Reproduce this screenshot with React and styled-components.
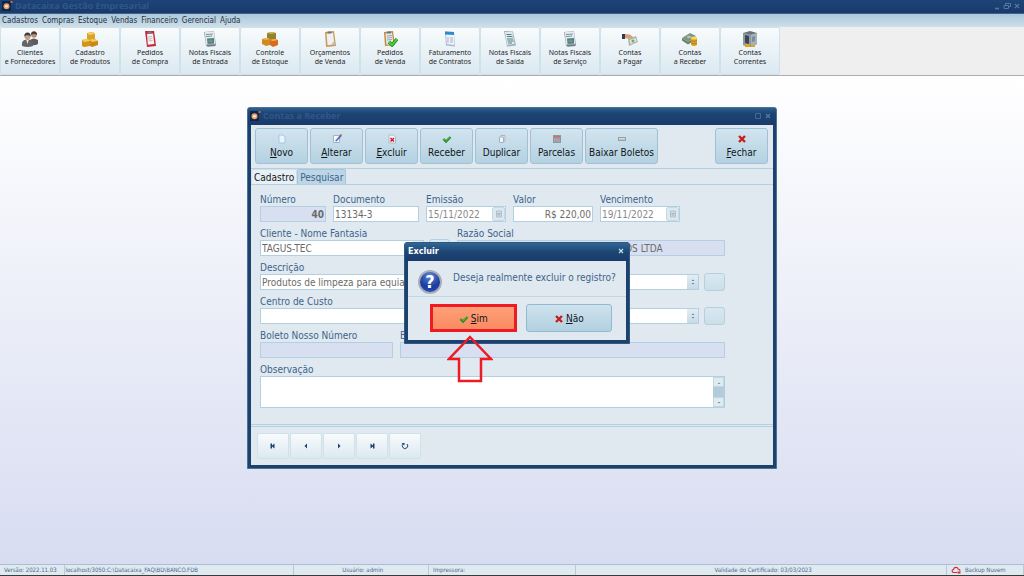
import React, { useState } from 'react'
import styled, { createGlobalStyle } from 'styled-components'

const menus = ['Cadastros', 'Compras', 'Estoque', 'Vendas', 'Financeiro', 'Gerencial', 'Ajuda']

const shortcuts = [
  { icon: 'people', top: 'Clientes', bottom: 'e Fornecedores' },
  { icon: 'gold', top: 'Cadastro', bottom: 'de Produtos' },
  { icon: 'redClip', top: 'Pedidos', bottom: 'de Compra' },
  { icon: 'invoice', top: 'Notas Fiscais', bottom: 'de Entrada' },
  { icon: 'boxes', top: 'Controle', bottom: 'de Estoque' },
  { icon: 'clip', top: 'Orçamentos', bottom: 'de Venda' },
  { icon: 'clipCheck', top: 'Pedidos', bottom: 'de Venda' },
  { icon: 'contract', top: 'Faturamento', bottom: 'de Contratos' },
  { icon: 'sheet', top: 'Notas Fiscais', bottom: 'de Saída' },
  { icon: 'invoice', top: 'Notas Fiscais', bottom: 'de Serviço' },
  { icon: 'pay', top: 'Contas', bottom: 'a Pagar' },
  { icon: 'receive', top: 'Contas', bottom: 'a Receber' },
  { icon: 'safe', top: 'Contas', bottom: 'Correntes' },
]

const actions = [
  { icon: 'new', hot: 'N', text: 'ovo' },
  { icon: 'edit', hot: 'A', text: 'lterar' },
  { icon: 'remove', hot: 'E', text: 'xcluir' },
  { icon: 'check', text: 'Receber' },
  { icon: 'copy', text: 'Duplicar' },
  { icon: 'calc', text: 'Parcelas' },
  { icon: 'slip', text: 'Baixar Boletos', wide: true },
]

const shortcutIcons = {
  people: (
    <>
      <circle cx="12" cy="4" r="2.8" fill="#b98d70" />
      <path d="M9 4c-.5-5 6.500-5 6 0-2-1.500-4-1.500-6 0z" fill="#4a3a32" />
      <path d="M8 13V9q3.500-3 8 0v4q-3 2-8 1z" fill="#5b5b60" />
      <circle cx="5.500" cy="5.500" r="3" fill="#c99d80" />
      <path d="M2.300 5.500c-.5-5.500 7-5.500 6.400 0-2-2-4.400-2-6.400 0z" fill="#423c3a" />
      <path d="M0 15v-3.500q1-3 5.500-3t5.500 3V15q-5 2-11 0z" fill="#646469" />
      <path d="M4.300 9l1.200 4 1.200-4z" fill="#eee" />
    </>
  ),
  gold: (
    <>
      <path d="M5 2l6-1 2 2v5l-6 1-2-1z" fill="#dca125" />
      <path d="M0 9l6-1 2 2v5l-6 1-2-1z" fill="#d39418" />
      <path d="M8 9l5-1 3 2v4l-6 2-2-1z" fill="#c98a14" />
      <path d="M5 2l6-1 2 2-6 1zM0 9l6-1 2 2-6 1zM8 9l5-1 3 2-6 1z" fill="#f3cd61" />
    </>
  ),
  redClip: (
    <>
      <path d="M3 0l9-.5L14 15l-9 1z" fill="#c4293a" />
      <path d="M5 3l6-.5 1.300 10.500-6.500.8z" fill="#f5f2f3" />
      <path d="M6 6l4-.5M6 8l4.500-.5M6.500 10l4-.5" stroke="#b4b0b8" strokeWidth=".8" />
      <path d="M5.500.5h4v2h-4z" fill="#767b85" />
    </>
  ),
  invoice: (
    <>
      <path d="M2 1l10-1 2 14-10 1z" fill="#9aa8b1" />
      <path d="M3 1l9-.5 1 12-9 1z" fill="#e5ecee" />
      <path d="M4 3.500l7-.5M4 5.500l6-.5" stroke="#7d95a3" />
      <path d="M5 7.500l7-.5v5.500l-6.500.5z" fill="#61788c" />
      <path d="M6.500 9l4-.3v2.300l-4 .3z" fill="#5aa866" />
      <path d="M4.500 14l9-.5v1.500l-8 .8z" fill="#6e7d8a" />
    </>
  ),
  boxes: (
    <>
      <path d="M5 2l5-1 4 1v6l-5 1-4-2z" fill="#93812d" />
      <path d="M5 2l5-1 4 1-5 1z" fill="#c7b75d" />
      <path d="M0 8l5-1 3 1v6l-4 1-4-2z" fill="#d08a1e" />
      <path d="M8 9l5-1 3 1v5l-5 2-3-2z" fill="#dc6a1b" />
      <path d="M0 8l5-1 3 1-4 1zM8 9l5-1 3 1-5 1z" fill="#f3b35c" />
    </>
  ),
  clip: (
    <>
      <path d="M3 1l9-1 2 15-10 1z" fill="#c99a50" />
      <path d="M4.500 2.500l6.500-.7 1.500 11.700-7 .7z" fill="#eef0f5" />
      <path d="M5.500.5h4v2h-4z" fill="#70757c" />
      <path d="M12 10l1 3.500-4 .5z" fill="#b7bcc8" />
    </>
  ),
  clipCheck: (
    <>
      <path d="M2 1l9-1 2 14-10 1z" fill="#bd8c43" />
      <path d="M3.500 2.500l6.500-.7 1.500 11.200-7 .7z" fill="#e6e8ec" />
      <path d="M5 5l5-.5M5 7l5-.5M5 9l5-.5" stroke="#8d949c" strokeWidth=".8" />
      <path d="M5 .5h4v2H5z" fill="#70757c" />
      <path d="M7 11l3 3 5-6" stroke="#1e8e1c" strokeWidth="3.400" fill="none" />
      <path d="M7 11l3 3 5-6" stroke="#4fd03c" strokeWidth="1.800" fill="none" />
    </>
  ),
  contract: (
    <>
      <path d="M3 .5l9 .5 1 14.500-9-1z" fill="#a9b8cd" />
      <path d="M4 2.500l8 .5.3 11-7.500-1z" fill="#f0f4f9" />
      <path d="M3 .5l9 .5v3L3 3.500z" fill="#2e8ad0" />
      <path d="M5 7h2M8 7h3M5 9h2M8 9h3M5 11h2M8 11h3" stroke="#a3b2c4" />
    </>
  ),
  sheet: (
    <>
      <path d="M2 0l9 .5 3 14-9 1z" fill="#9db0b7" />
      <path d="M3 1h7.500l2 12-7.500 1z" fill="#dde9eb" />
      <path d="M4.500 3.500h5M5 5.500h5.500M5 8h6M5.500 10h6M6 12h4" stroke="#577f8b" />
    </>
  ),
  pay: (
    <>
      <path d="M0 3h3v5H0z" fill="#303a52" />
      <path d="M3 3l5 .5 3 2.500-1 2-7-.8z" fill="#d7a078" />
      <path d="M6 8l8-3 2 6-9 4z" fill="#a8b5a2" />
      <path d="M7.500 9l6-2 1.300 3.300-6.300 3z" fill="#dfe6d9" />
      <circle cx="11" cy="10" r="1.500" fill="#889c80" />
    </>
  ),
  receive: (
    <>
      <path d="M0 7l8-5 6 3-8 6z" fill="#809680" />
      <path d="M0 7l6 4 6-4v2.500l-6 4-6-4z" fill="#65806a" />
      <ellipse cx="7" cy="6" rx="2" ry="1.300" fill="#b5c6b2" />
      <path d="M9 7v7q3 2 6 0V7z" fill="#dba21d" />
      <ellipse cx="12" cy="7" rx="3" ry="1.500" fill="#f8d75a" />
      <path d="M9 9.500q3 2 6 0M9 12q3 2 6 0" stroke="#b98418" fill="none" />
    </>
  ),
  safe: (
    <>
      <path d="M1 2l7-2 7 2v11l-6 3-8-2z" fill="#66717b" />
      <path d="M1 2l8 1.500V16l-8-2z" fill="#8d98a2" />
      <path d="M3 4l4 1v8l-4-1z" fill="#3b4652" />
      <path d="M9 3.500L15 2v11l-6 3z" fill="#a6b1b9" />
      <path d="M10 6l3-1v5l-3 1z" fill="#7d8a95" />
      <path d="M3 13h5v3H3zM9 14h4v2H9z" fill="#dea81d" />
    </>
  ),
}

const smallIcons = {
  new: <path d="M2 1h4l2 2v6H2z" fill="#eaf4ff" stroke="#a5c6e6" />,
  edit: (
    <>
      <path d="M1.500 1.500h6v7h-6z" fill="#f6f9fd" stroke="#a4b3ca" />
      <path d="M3 7l5-6 1.500 1.500-5 5z" fill="#5a70ba" />
      <path d="M7.500 1L9 0l1 1-1 1.500z" fill="#c5503a" />
    </>
  ),
  remove: (
    <>
      <path d="M2 1h4.500l2 2v6H2z" fill="#f3f5fa" stroke="#adbacb" />
      <path d="M3.500 4l3.500 3.500M7 4L3.500 7.500" stroke="#cc1f28" strokeWidth="1.500" />
    </>
  ),
  check: (
    <>
      <path d="M1.500 5l2.500 2.500L8.500 3" stroke="#2a8c29" strokeWidth="2.400" fill="none" />
      <path d="M2 4.800l2 2L8 3" stroke="#4dbb3c" strokeWidth="1" fill="none" />
    </>
  ),
  copy: (
    <>
      <path d="M4 1.500h4v5.500H4z" fill="#e4eaf0" stroke="#a5b4c3" />
      <path d="M2.500 3h4v5.500h-4z" fill="#f1f5f9" stroke="#a5b4c3" />
    </>
  ),
  calc: (
    <>
      <path d="M1 1h8v8H1z" fill="#92969c" />
      <path d="M2 2h6v1.500H2z" fill="#d2706c" />
      <path d="M2 5h6M2 7h6" stroke="#bdc0c6" strokeDasharray="1.400 .8" />
    </>
  ),
  slip: (
    <>
      <path d="M1 3h8v4H1z" fill="#98a0a8" />
      <path d="M2 4.200h6v1.300H2z" fill="#e4e8eb" />
    </>
  ),
  close: <path d="M2 2l6 6M8 2l-6 6" stroke="#c81e1b" strokeWidth="2.400" />,
  date: (
    <>
      <path d="M2.500 2h5v6h-5z" fill="#d5dbe1" stroke="#b3bec9" />
      <path d="M3.500 4.500h3M3.500 6h3" stroke="#9aa6b3" strokeWidth=".8" />
    </>
  ),
  spin: <path d="M3.500 4L5 2.500 6.500 4zM3.500 6L5 7.500 6.500 6z" fill="#6485a3" />,
  up: <path d="M3.500 6L5 4.500 6.500 6z" fill="#6c90ad" />,
  down: <path d="M3.500 4L5 5.500 6.500 4z" fill="#6c90ad" />,
  first: <path d="M2.500 2.500H4v2L6.500 2.500v5L4 5.500v2H2.500z" fill="#1c3f70" />,
  prev: <path d="M6 2.500v5L3.500 5z" fill="#1c3f70" />,
  next: <path d="M4 2.500v5L6.500 5z" fill="#1c3f70" />,
  last: <path d="M7.500 2.500H6v2L3.500 2.500v5L6 5.500v2h1.500z" fill="#1c3f70" />,
  reload: (
    <>
      <path d="M3.500 2.600A2.700 2.700 0 1 0 7 3" stroke="#1c3f70" strokeWidth="1" fill="none" />
      <path d="M1.500 2h3v2.500z" fill="#1c3f70" />
    </>
  ),
  min: <path d="M3 7.500h4" stroke="#55789c" strokeWidth="1.600" />,
  restore: <path d="M3.500 4V2.500h5v3H7M2 4.500h4.500v3H2z" stroke="#55789c" fill="none" />,
  max: <path d="M2.500 2.500h5v5h-5z" stroke="#44688f" fill="none" />,
  x: <path d="M3 3l4 4M7 3L3 7" stroke="currentColor" strokeWidth="1.200" />,
}

const Glyph = ({ name }) => (
  <svg width="10" height="10" viewBox="0 0 10 10" aria-hidden="true">{smallIcons[name]}</svg>
)

const Logo = () => (
  <svg width="12" height="12" viewBox="0 0 12 12" aria-hidden="true">
    <rect x="1" y="1" width="9" height="10" fill="#0f2747" />
    <circle cx="5.500" cy="6.300" r="3" fill="#ef9a67" />
    <circle cx="5.500" cy="6.300" r="1.300" fill="#fff1e4" />
    <path d="M9.500 1h2v2h-2z" fill="#e2603a" />
  </svg>
)

const Field = ({ id, label, children, ...rest }) => (
  <FieldBox {...rest}>
    <Label htmlFor={id}>{label}</Label>
    {children}
  </FieldBox>
)

const App = () => {
  const [tab, setTab] = useState('Cadastro')
  const [open, setOpen] = useState(true)

  return (
    <>
      <GlobalStyle />
      <Page>
        <TitleBar>
          <Logo />
          <Title>Datacaixa Gestão Empresarial</Title>
          <WinButton aria-label="Minimizar"><Glyph name="min" /></WinButton>
          <WinButton aria-label="Restaurar"><Glyph name="restore" /></WinButton>
          <WinButton aria-label="Fechar"><Glyph name="x" /></WinButton>
        </TitleBar>
        <MenuBar>
          {menus.map((el) => <MenuItem key={el}>{el}</MenuItem>)}
        </MenuBar>
        <Shortcuts>
          {shortcuts.map((el) => (
            <Shortcut key={el.top + el.bottom}>
              <svg width="16" height="16" viewBox="0 0 16 16" aria-hidden="true">{shortcutIcons[el.icon]}</svg>
              <span>{el.top}<br />{el.bottom}</span>
            </Shortcut>
          ))}
        </Shortcuts>

        <Desktop>
          <Window>
            <WindowTitle>
              <Logo />
              <Title>Contas a Receber</Title>
              <WinButton aria-label="Maximizar"><Glyph name="max" /></WinButton>
              <WinButton aria-label="Fechar janela"><Glyph name="x" /></WinButton>
            </WindowTitle>
            <Actions>
              {actions.map((el) => (
                <Action key={el.text} $wide={el.wide}>
                  <Glyph name={el.icon} />
                  <span>{el.hot && <u>{el.hot}</u>}{el.text}</span>
                </Action>
              ))}
              <CloseAction>
                <Glyph name="close" />
                <span><u>F</u>echar</span>
              </CloseAction>
            </Actions>
            <Tabs>
              {['Cadastro', 'Pesquisar'].map((el) => (
                <Tab key={el} $active={tab === el} onClick={() => setTab(el)}>{el}</Tab>
              ))}
            </Tabs>

            <Form>
              <Row>
                <Field id="numero" label="Número" $width={66}>
                  <Input id="numero" defaultValue="40" readOnly $locked $right $bold />
                </Field>
                <Field id="documento" label="Documento" $width={86}>
                  <Input id="documento" defaultValue="13134-3" />
                </Field>
                <Field id="emissao" label="Emissão" $width={80}>
                  <Combo>
                    <Input id="emissao" defaultValue="15/11/2022" $bare $dim />
                    <DateButton aria-label="Escolher emissão"><Glyph name="date" /></DateButton>
                  </Combo>
                </Field>
                <Field id="valor" label="Valor" $width={80}>
                  <Input id="valor" defaultValue="R$ 220,00" $right />
                </Field>
                <Field id="vencimento" label="Vencimento" $width={80}>
                  <Combo>
                    <Input id="vencimento" defaultValue="19/11/2022" $bare $dim />
                    <DateButton aria-label="Escolher vencimento"><Glyph name="date" /></DateButton>
                  </Combo>
                </Field>
              </Row>
              <Row>
                <Field id="cliente" label="Cliente - Nome Fantasia" $width={190}>
                  <Line>
                    <Combo>
                      <Input id="cliente" defaultValue="TAGUS-TEC" $bare />
                      <SpinButton aria-label="Abrir clientes"><Glyph name="spin" /></SpinButton>
                    </Combo>
                    <SquareButton aria-label="Buscar cliente" />
                  </Line>
                </Field>
                <Field id="razao" label="Razão Social" $grow>
                  <Input id="razao" defaultValue="TAGUS - TEC SERVIÇOS TECNOLÓGICOS LTDA" readOnly $locked />
                </Field>
              </Row>
              <Field id="descricao" label="Descrição">
                <Line>
                  <Combo>
                    <Input id="descricao" defaultValue="Produtos de limpeza para equiapamentos" $bare />
                    <SpinButton aria-label="Abrir descrições"><Glyph name="spin" /></SpinButton>
                  </Combo>
                  <SquareButton aria-label="Buscar descrição" />
                </Line>
              </Field>
              <Field id="centro" label="Centro de Custo">
                <Line>
                  <Combo>
                    <Input id="centro" defaultValue="" $bare />
                    <SpinButton aria-label="Abrir centros de custo"><Glyph name="spin" /></SpinButton>
                  </Combo>
                  <SquareButton aria-label="Buscar centro de custo" />
                </Line>
              </Field>
              <Row>
                <Field id="nosso" label="Boleto Nosso Número" $width={133}>
                  <Input id="nosso" readOnly $locked />
                </Field>
                <Field id="banco" label="Boleto Banco" $grow>
                  <Input id="banco" readOnly $locked />
                </Field>
              </Row>
              <Field id="obs" label="Observação">
                <Memo>
                  <TextArea id="obs" />
                  <Scroll>
                    <ScrollButton aria-label="Subir"><Glyph name="up" /></ScrollButton>
                    <ScrollButton aria-label="Descer"><Glyph name="down" /></ScrollButton>
                  </Scroll>
                </Memo>
              </Field>
            </Form>

            <Pager>
              <PagerButton aria-label="Primeiro"><Glyph name="first" /></PagerButton>
              <PagerButton aria-label="Anterior"><Glyph name="prev" /></PagerButton>
              <PagerButton aria-label="Próximo"><Glyph name="next" /></PagerButton>
              <PagerButton aria-label="Último"><Glyph name="last" /></PagerButton>
              <PagerButton aria-label="Atualizar"><Glyph name="reload" /></PagerButton>
            </Pager>

            {open && (
              <Dialog role="dialog" aria-label="Excluir">
                <DialogTitle>
                  <DialogName>Excluir</DialogName>
                  <WinButton $light aria-label="Fechar aviso" onClick={() => setOpen(false)}><Glyph name="x" /></WinButton>
                </DialogTitle>
                <Question>
                  <QuestionMark>?</QuestionMark>
                  <Message>Deseja realmente excluir o registro?</Message>
                </Question>
                <Answers>
                  <Answer $hot onClick={() => setOpen(false)}><Glyph name="check" /><span><u>S</u>im</span></Answer>
                  <Answer onClick={() => setOpen(false)}><Glyph name="close" /><span><u>N</u>ão</span></Answer>
                </Answers>
                <Arrow viewBox="0 0 46 48" aria-hidden="true">
                  <path d="M23 2L44 24H34V46H12V24H2Z" fill="none" stroke="#ed1c24" strokeWidth="2.500" />
                </Arrow>
              </Dialog>
            )}
          </Window>
        </Desktop>

        <Status>
          <Cell $basis={62}>Versão: 2022.11.03</Cell>
          <Cell $basis={233} $tight>localhost/3050:C:\Datacaixa_FAQ\BD\BANCO.FDB</Cell>
          <Cell $basis={134} $center>Usuário: admin</Cell>
          <Cell $basis={146}>Impressora:</Cell>
          <Cell $basis={375} $center>Validade do Certificado: 03/03/2023</Cell>
          <Cell $basis={74}>
            <svg width="10" height="8" viewBox="0 0 10 8" aria-hidden="true">
              <path d="M6 6.500H2.500C.5 6 .8 3.500 2.500 3.500 2.800 1 6.500.5 7 3c1.800 0 2 1.500 1.800 2" stroke="#d02a35" strokeWidth="1.200" fill="none" />
              <path d="M6.500 5.500h3v2h-3z" fill="#d02a35" />
            </svg>
            Backup Nuvem
          </Cell>
        </Status>
      </Page>
    </>
  )
}

export default App

const GlobalStyle = createGlobalStyle`
* {
  box-sizing: border-box;
}
body {
  margin: 0;
}
body, button, input, textarea {
  font-family: "DejaVu Sans Condensed", "DejaVu Sans", sans-serif;
}
button {
  margin: 0;
  padding: 0;
  border: 0;
  background: none;
}
svg {
  display: block;
  flex: none;
}
`
const Page = styled.div`
  display: flex;
  flex-direction: column;
  min-height: 100vh;
  border-bottom: 1px solid #3b3b3b;
`
const TitleBar = styled.header`
  display: flex;
  align-items: center;
  gap: 2px;
  height: 14px;
  padding: 0 3px 1px 1px;
  background: linear-gradient(#1d4577, #193a6b);
  border-bottom: 1px solid #3d6288;
`
const Title = styled.div`
  flex: 1;
  color: #31578a;
  font-family: "Noto Sans", sans-serif;
  font-size: 9px;
  line-height: 12px;
  font-weight: 700;
  white-space: nowrap;
`
const WinButton = styled.button`
  width: 8px;
  height: 10px;
  display: flex;
  justify-content: center;
  color: ${(p) => (p.$light ? '#c5dcec' : '#55789c')};
`
const MenuBar = styled.nav`
  display: flex;
  gap: 4px;
  height: 13px;
  padding-left: 2px;
  background: linear-gradient(#abc7dc, #cddfe9);
`
const MenuItem = styled.button`
  color: #24303c;
  font-size: 8px;
  line-height: 13px;
`
const Shortcuts = styled.div`
  display: flex;
  height: 49px;
  background: #efefef;
  border-bottom: 1px solid #adadad;
`
const Shortcut = styled.button`
  width: 60px;
  display: flex;
  flex-direction: column;
  align-items: center;
  gap: 1px;
  padding-top: 3px;
  color: #262626;
  font-family: "Noto Sans", sans-serif;
  font-size: 7px;
  line-height: 9px;
  white-space: nowrap;
  background: linear-gradient(#f8fbfc, #dbe9f1);
  border: 1px solid #cfe2ec;
  border-radius: 2px;
`
const Desktop = styled.main`
  flex: 1;
  display: flex;
  justify-content: center;
  align-items: flex-start;
  padding: 31px 8px;
  background: linear-gradient(#ffffff, #d7dcf1);
`
const Window = styled.section`
  position: relative;
  width: 100%;
  max-width: 530px;
  padding: 0 3px 3px;
  background: #1b416f;
  border: 1px solid #4e7196;
  border-radius: 3px 3px 0 0;
`
const WindowTitle = styled.div`
  display: flex;
  align-items: center;
  gap: 2px;
  height: 17px;
  margin: 0 -3px;
  padding: 0 4px 2px 1px;
  background: linear-gradient(#2b6091, #1d4574 30%, #193a6b);
`
const Actions = styled.div`
  display: flex;
  gap: 2px;
  height: 44px;
  padding: 3px 5px 4px 4px;
  background: #e1e9f0;
  border-bottom: 1px solid #b5cfe2;
`
const Action = styled.button`
  width: ${(p) => (p.$wide ? '73px' : '53px')};
  display: flex;
  flex-direction: column;
  align-items: center;
  gap: 3px;
  padding-top: 5px;
  color: #10161c;
  font-size: 10px;
  line-height: 12px;
  white-space: nowrap;
  background: linear-gradient(#d2e4ef, #b4d1e1);
  border: 1px solid #9fc1d6;
  border-radius: 3px;
`
const CloseAction = styled(Action)`
  margin-left: auto;
`
const Tabs = styled.div`
  display: flex;
  align-items: flex-end;
  height: 16px;
  background: #e1e9f0;
  border-bottom: 1px solid #b5cfe2;
`
const Tab = styled.button`
  height: 15px;
  padding: 1px 2px 0;
  color: ${(p) => (p.$active ? '#10161c' : '#36658f')};
  background: ${(p) => (p.$active ? '#e9f0f5' : '#bdd5e4')};
  border: 1px solid ${(p) => (p.$active ? '#cfe0eb' : '#a9c7db')};
  border-bottom: 0;
  border-radius: 2px 2px 0 0;
  font-size: 10px;
  line-height: 14px;
`
const Form = styled.form`
  display: flex;
  flex-direction: column;
  gap: 6px;
  padding: 9px 48px 16px 9px;
  background: #e1e9f0;
`
const Row = styled.div`
  display: flex;
  gap: 7px;
`
const FieldBox = styled.div`
  display: flex;
  flex-direction: column;
  min-width: 0;
  flex: ${(p) => (p.$grow ? '1' : 'none')};
  width: ${(p) => (p.$width ? `${p.$width}px` : 'auto')};
`
const Label = styled.label`
  color: #3b648c;
  font-size: 10px;
  line-height: 12px;
  white-space: nowrap;
`
const Input = styled.input`
  flex: 1;
  width: 100%;
  min-width: 0;
  height: 16px;
  flex-basis: 16px;
  padding: 0 1px;
  outline: 0;
  color: ${(p) => (p.$dim ? '#8a8a8a' : '#6b6b6b')};
  background: ${(p) => (p.$locked ? '#d8dff1' : '#fff')};
  border: ${(p) => (p.$bare ? '0' : '1px solid #b3cfe2')};
  font-size: 10px;
  font-weight: ${(p) => (p.$bold ? 700 : 400)};
  text-align: ${(p) => (p.$right ? 'right' : 'left')};
`
const Line = styled.div`
  display: flex;
  align-items: center;
  gap: 5px;
  height: 16px;
`
const Combo = styled.div`
  flex: 1;
  display: flex;
  height: 16px;
  min-width: 0;
  background: #fff;
  border: 1px solid #b3cfe2;
  overflow: hidden;

  input {
    height: 14px;
  }
`
const DateButton = styled.button`
  width: 13px;
  display: flex;
  align-items: center;
  justify-content: center;
  background: #dbe9f1;
  border: 1px solid #c5dae7;
  border-radius: 2px;
`
const SpinButton = styled.button`
  width: 11px;
  display: flex;
  align-items: center;
  justify-content: center;
  background: linear-gradient(#e3edf3, #c8dae6);
`
const SquareButton = styled.button`
  width: 21px;
  height: 18px;
  background: linear-gradient(#d9e8f0, #cbdfe9);
  border: 1px solid #b5d0e0;
  border-radius: 3px;
`
const Memo = styled.div`
  display: flex;
  height: 32px;
  background: #fff;
  border: 1px solid #b3cfe2;
`
const TextArea = styled.textarea`
  flex: 1;
  min-width: 0;
  padding: 1px;
  border: 0;
  outline: 0;
  resize: none;
  font-size: 10px;
`
const Scroll = styled.div`
  width: 11px;
  display: flex;
  flex-direction: column;
  justify-content: space-between;
  background: #b3cbdb;
`
const ScrollButton = styled.button`
  height: 10px;
  display: flex;
  justify-content: center;
  background: #dfeaf1;
  border: 1px solid #c2d6e3;
`
const Pager = styled.div`
  display: flex;
  gap: 1px;
  height: 41px;
  padding: 6px;
  background: #e1e9f0;
  border-top: 3px double #b5cfe2;
`
const PagerButton = styled.button`
  width: 32px;
  height: 26px;
  display: flex;
  align-items: center;
  justify-content: center;
  background: linear-gradient(#f8fbfc, #dbe9f1);
  border: 1px solid #cfe2ec;
  border-radius: 2px;
`
/* sits over the form */
const Dialog = styled.div`
  position: absolute;
  top: 134px;
  left: 156px;
  width: 226px;
  padding: 0 3px 3px;
  background: #1b416f;
  border: 1px solid #31587f;
  border-radius: 3px 3px 0 0;
`
const DialogTitle = styled.div`
  display: flex;
  align-items: center;
  height: 18px;
  margin: 0 -3px;
  padding: 0 4px 2px 3px;
  background: linear-gradient(#2f6695, #1d4574 50%, #193a6b);
`
const DialogName = styled.div`
  flex: 1;
  color: #fff;
  font-size: 9px;
  line-height: 12px;
  font-weight: 700;
`
const Question = styled.div`
  display: flex;
  gap: 11px;
  height: 36px;
  padding: 9px 0 0 10px;
  background: #e1e9f0;
  border-bottom: 1px solid #c1d6e5;
`
const QuestionMark = styled.div`
  width: 24px;
  height: 24px;
  color: #fff;
  font-size: 18px;
  line-height: 20px;
  font-weight: 700;
  text-align: center;
  background: radial-gradient(circle at 50% 20%, #5a86dc, #1c3a9d 60%, #2b58c4);
  border: 2px solid #a9adb8;
  border-radius: 50%;
`
const Message = styled.div`
  color: #3b648c;
  font-size: 10px;
  line-height: 16px;
  white-space: nowrap;
`
const Answers = styled.div`
  display: flex;
  gap: 9px;
  height: 43px;
  padding: 7px 14px 8px 22px;
  background: #e1e9f0;
`
const Answer = styled.button`
  flex: 1 1 50%;
  display: flex;
  align-items: center;
  justify-content: center;
  gap: 2px;
  padding-top: 2px;
  color: #10161c;
  font-size: 10px;
  line-height: 12px;
  background: ${(p) => (p.$hot ? 'linear-gradient(#ffa077, #fa8a62)' : 'linear-gradient(#cfe2ee, #b2d0e0)')};
  border: ${(p) => (p.$hot ? '3px solid #ed1c24' : '1px solid #93b9d0')};
  border-radius: ${(p) => (p.$hot ? '0' : '3px')};
`
const Arrow = styled.svg`
  position: absolute;
  top: 92px;
  left: 42px;
  width: 46px;
  height: 48px;
`
const Status = styled.footer`
  display: flex;
  height: 11px;
  background: #e1e9f0;
  border-top: 1px solid #a9bfd6;
`
const Cell = styled.div`
  flex: ${(p) => p.$basis} 1 0;
  min-width: 0;
  display: flex;
  align-items: center;
  justify-content: ${(p) => (p.$center ? 'center' : 'flex-start')};
  gap: 4px;
  padding-left: ${(p) => (p.$tight ? '0' : '4px')};
  color: #44698f;
  font-size: 6px;
  line-height: 10px;
  white-space: nowrap;
  border-right: 1px solid #b5cadb;
`
